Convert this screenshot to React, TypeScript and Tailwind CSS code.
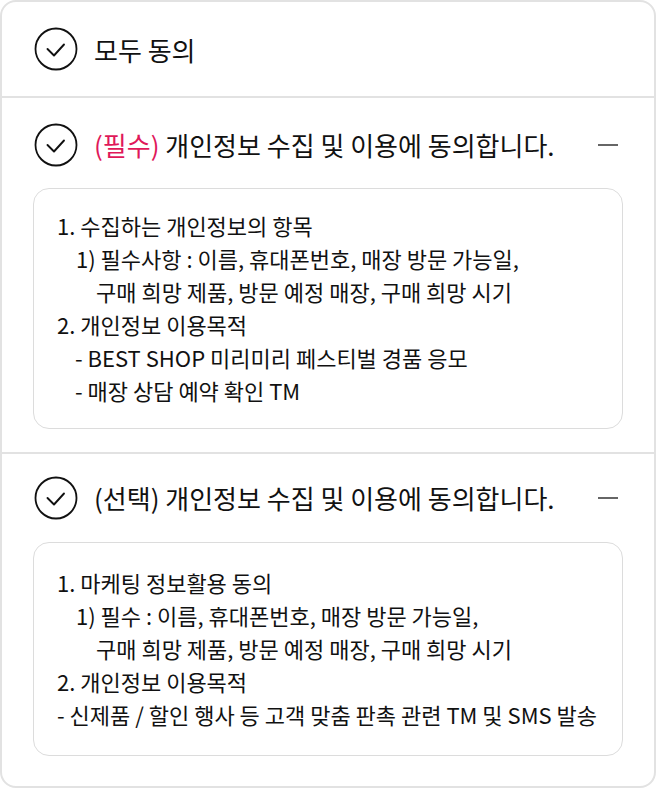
import React from 'react';

const CheckIcon = () => (
  <svg width="44" height="44" viewBox="0 0 44 44" fill="none" className="shrink-0">
    <circle cx="22" cy="22" r="20.5" stroke="#111" strokeWidth="1.8" />
    <path d="M13.5 22l6.5 6.5 10-11" stroke="#111" strokeWidth="1.9" strokeLinecap="round" strokeLinejoin="round" />
  </svg>
);

const Minus = () => <span className="ml-auto mr-[5px] block h-[2px] w-[20px] bg-[#666]" />;

type SectionProps = {
  label: React.ReactNode;
  lines: React.ReactNode[];
  pt: string;
  mt: string;
  pad: string;
};

const Section = ({ label, lines, pt, mt, pad }: SectionProps) => (
  <div className={`border-t-2 border-[#e2e2e2] px-[31px] pb-[23px] ${pt}`}>
    <div className="flex items-center gap-[16px] pl-[1px]">
      <CheckIcon />
      <div className="text-[26px] leading-none text-[#111]">{label}</div>
      <Minus />
    </div>
    <div className={`${mt} ${pad} rounded-[16px] border border-[#dcdcdc] pl-[23px] text-[22px] leading-[33px] text-[#111]`}>
      {lines}
    </div>
  </div>
);

export default function App() {
  return (
    <div className="bg-white" style={{ fontFamily: '"Noto Sans CJK KR", "Noto Sans", sans-serif' }}>
      <div className="h-[788px] overflow-hidden rounded-[16px] border-2 border-[#e2e2e2] bg-white">
        <div className="flex h-[94px] items-center gap-[16px] px-[32px]">
          <CheckIcon />
          <span className="text-[26px] text-[#111]">모두 동의</span>
        </div>
        <Section
          pt="pt-[25px]"
          mt="mt-[21px]"
          pad="pt-[20px] pb-[21px]"
          label={
            <>
              <span className="text-[#e0185a]">(필수)</span> 개인정보 수집 및 이용에 동의합니다.
            </>
          }
          lines={[
            <div key="1">1. 수집하는 개인정보의 항목</div>,
            <div key="2" className="pl-[19px]">1) 필수사항 : 이름, 휴대폰번호, 매장 방문 가능일,</div>,
            <div key="3" className="pl-[39px]">구매 희망 제품, 방문 예정 매장, 구매 희망 시기</div>,
            <div key="4">2. 개인정보 이용목적</div>,
            <div key="5" className="pl-[18px]">- BEST SHOP 미리미리 페스티벌 경품 응모</div>,
            <div key="6" className="pl-[18px]">- 매장 상담 예약 확인 TM</div>,
          ]}
        />
        <Section
          pt="pt-[22px]"
          mt="mt-[22px]"
          pad="pt-[23px] pb-[24px]"
          label="(선택) 개인정보 수집 및 이용에 동의합니다."
          lines={[
            <div key="1">1. 마케팅 정보활용 동의</div>,
            <div key="2" className="pl-[19px]">1) 필수 : 이름, 휴대폰번호, 매장 방문 가능일,</div>,
            <div key="3" className="pl-[39px]">구매 희망 제품, 방문 예정 매장, 구매 희망 시기</div>,
            <div key="4">2. 개인정보 이용목적</div>,
            <div key="5">- 신제품 / 할인 행사 등 고객 맞춤 판촉 관련 TM 및 SMS 발송</div>,
          ]}
        />
      </div>
    </div>
  );
}
